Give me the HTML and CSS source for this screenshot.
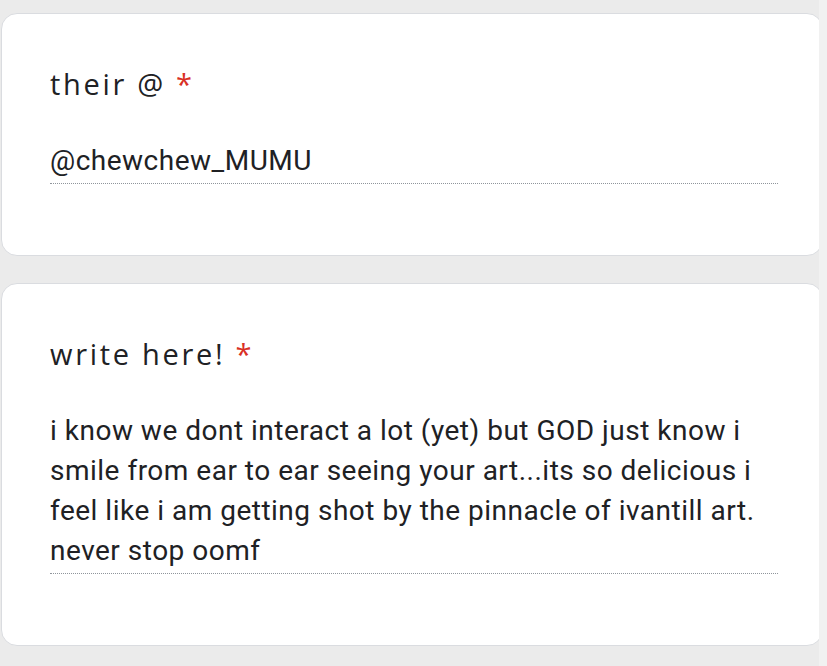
FILE: index.html
```html
<!DOCTYPE html>
<html>
<head>
<meta charset="utf-8">
<link rel="stylesheet" href="styles.css">
</head>
<body>
<div class="page">
  <div class="card">
    <div class="title">their @<span class="req">*</span></div>
    <div class="answer">@chewchew_MUMU</div>
  </div>
  <div class="card">
    <div class="title">write here!<span class="req">*</span></div>
    <div class="answer">i know we dont interact a lot (yet) but GOD just know i smile from ear to ear seeing your art...its so delicious i feel like i am getting shot by the pinnacle of ivantill art. never stop oomf</div>
  </div>
</div>
<div class="track"></div>
</body>
</html>
```
FILE: styles.css
```css
html, body {
  margin: 0;
  padding: 0;
  background: #ebebeb;
  height: 100%;
  overflow: hidden;
}
.page {
  display: flex;
  flex-direction: column;
  gap: 27px;
  padding: 13px 0 0 1px;
}
.card {
  width: 772px;
  background: #ffffff;
  border: 1px solid #dadce0;
  border-radius: 16px;
  padding: 52px 0 71px 48px;
}
.title {
  font-family: "Open Sans", "Lato", sans-serif;
  font-weight: 370;
  font-size: 29px;
  line-height: 36px;
  color: #202124;
  letter-spacing: 2.7px;
}
.req {
  color: #d93025;
  padding-left: 10px;
  font-weight: 500;
  letter-spacing: 0;
}
.answer {
  margin-top: 39px;
  padding-bottom: 2px;
  width: 728px;
  font-family: "Roboto", sans-serif;
  font-size: 28px;
  line-height: 40px;
  letter-spacing: 0.5px;
  color: #202124;
  border-bottom: 1px dotted #8f959b;
}
.track {
  position: absolute;
  top: 0;
  right: 0;
  width: 8px;
  height: 100%;
  background: #f1f1f1;
}
```
